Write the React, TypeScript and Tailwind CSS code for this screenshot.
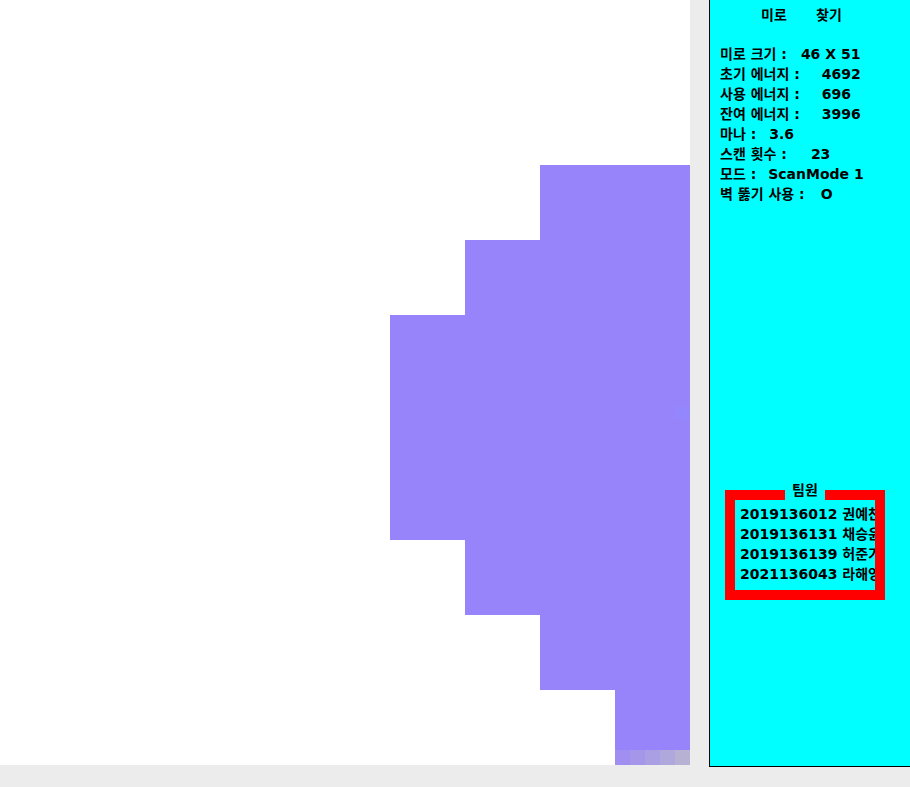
const font = { fontFamily: '"DejaVu Sans", "Noto Sans CJK KR", sans-serif' };

const stats: { label: string; value: string; gap: string }[] = [
  { label: '미로 크기 :', value: '46 X 51', gap: 'ml-[14px]' },
  { label: '초기 에너지 :', value: '4692', gap: 'ml-[22px]' },
  { label: '사용 에너지 :', value: '696', gap: 'ml-[22px]' },
  { label: '잔여 에너지 :', value: '3996', gap: 'ml-[22px]' },
  { label: '마나 :', value: '3.6', gap: 'ml-[13px]' },
  { label: '스캔 횟수 :', value: '23', gap: 'ml-[24px]' },
  { label: '모드 :', value: 'ScanMode 1', gap: 'ml-[12px]' },
  { label: '벽 뚫기 사용 :', value: 'O', gap: 'ml-[16px]' },
];

const members = [
  '2019136012 권예찬',
  '2019136131 채승윤',
  '2019136139 허준기',
  '2021136043 라해영',
];

// rows of the visible part of the maze, right aligned
const rows = [
  { h: 'h-[75px]', w: 'w-[150px]' },
  { h: 'h-[75px]', w: 'w-[225px]' },
  { h: 'h-[225px]', w: 'w-[300px]', spot: true },
  { h: 'h-[75px]', w: 'w-[225px]' },
  { h: 'h-[75px]', w: 'w-[150px]' },
  { h: 'h-[60px]', w: 'w-[75px]' },
];

const fade = ['bg-[#a08ff0]', 'bg-[#a596e9]', 'bg-[#a99fe2]', 'bg-[#afa8dc]', 'bg-[#b7b2d3]'];

function Maze() {
  return (
    <div className="w-[690px] h-[765px] bg-white flex flex-col shrink-0">
      <div className="h-[165px]" />
      {rows.map((r, i) => (
        <div key={i} className={`flex justify-end ${r.h}`}>
          <div className={`relative h-full bg-[#9784fa] ${r.w}`}>
            {r.spot && <div className="absolute top-[90px] right-0 w-[15px] h-[15px] bg-[#9486fc]" />}
          </div>
        </div>
      ))}
      <div className="flex justify-end h-[15px]">
        {fade.map((c) => (
          <div key={c} className={`w-[15px] h-full ${c}`} />
        ))}
      </div>
    </div>
  );
}

function Panel() {
  return (
    <div
      className="w-[202px] h-[767px] shrink-0 bg-[#00ffff] border-l border-b border-black text-black font-bold text-[14px] leading-[20px] pl-[10px]"
      style={font}
    >
      <div className="pt-[5px] pl-[41px] whitespace-pre">미로      찾기</div>
      <div className="mt-[19px] flex flex-col">
        {stats.map((s) => (
          <div key={s.label} className="flex whitespace-pre">
            <span>{s.label}</span>
            <span className={s.gap}>{s.value}</span>
          </div>
        ))}
      </div>
      <div className="relative mt-[286px] ml-[5px] w-[160px] h-[110px] border-[10px] border-[#ff0000]">
        <div className="absolute -top-[20px] left-[50px] w-[40px] bg-[#00ffff] text-center leading-[20px]">팀원</div>
        <div className="h-full overflow-hidden pl-[5px] pt-[4px] flex flex-col">
          {members.map((m) => (
            <div key={m} className="whitespace-nowrap">{m}</div>
          ))}
        </div>
      </div>
    </div>
  );
}

export default function App() {
  return (
    <div className="w-[910px] h-[787px] overflow-hidden bg-[#ececec] flex items-start gap-[19px]">
      <Maze />
      <Panel />
    </div>
  );
}
